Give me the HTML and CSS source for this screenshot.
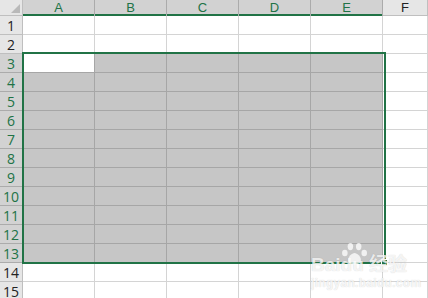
FILE: index.html
```html
<!DOCTYPE html>
<html lang="en">
<head>
    <meta charset="UTF-8">
    <title>Sheet1</title>
    <link rel="stylesheet" href="styles.css">
</head>
<body>
    <div class="sheet">
        <div class="grid" id="grid"></div>
        <div class="selection"><span class="handle"></span></div>
        <div class="watermark">
            <svg class="paw" width="28" height="24" viewBox="0 0 30 26">
                <ellipse cx="10" cy="5" rx="3" ry="4"/>
                <ellipse cx="19" cy="5" rx="3" ry="4"/>
                <ellipse cx="4" cy="12" rx="3" ry="3.5"/>
                <ellipse cx="25" cy="12" rx="3" ry="3.5"/>
                <path d="M8 22 C6 16 12 12 14.5 12 C17 12 23 16 21 22 C19 25 10 25 8 22 Z"/>
            </svg>
            <div class="wm-brand">Bai<span>du</span> 经验</div>
            <div class="wm-url">jingyan.baidu.com</div>
        </div>
    </div>

    <script>
        const grid = document.getElementById('grid');
        const cols = ['A', 'B', 'C', 'D', 'E', 'F'];

        function cell(cls, text) {
            const div = document.createElement('div');
            div.className = cls;
            if (text) div.textContent = text;
            grid.appendChild(div);
        }

        // header row
        cell('corner');
        cols.forEach(function (c, i) {
            cell(i < 5 ? 'col-head picked' : 'col-head', c);
        });

        // rows 1 - 15
        for (let r = 1; r <= 15; r++) {
            const inRange = r >= 3 && r <= 13;
            cell(inRange ? 'row-head picked' : 'row-head', String(r));
            cols.forEach(function (c, i) {
                let cls = 'cell';
                if (inRange && i < 5) {
                    cls += (r === 3 && i === 0) ? ' active' : ' filled';
                }
                cell(cls);
            });
        }
    </script>
</body>
</html>
```

FILE: styles.css
```css
body {
    margin: 0;
    background-color: white;
    font-family: "Open Sans", "Noto Sans", sans-serif;
    overflow: hidden;
}
.sheet {
    position: relative;
    width: 428px;
    height: 298px;
}
.grid {
    display: grid;
    grid-template-columns: 23px repeat(5, 72px) 1fr;
    grid-template-rows: 16px repeat(15, 19px);
}
.grid > div {
    box-sizing: border-box;
}
.corner {
    position: relative;
    background-color: #e6e6e6;
    border-right: 1px solid #bfbfbf;
    border-bottom: 1px solid #bfbfbf;
}
.corner::after {
    content: "";
    position: absolute;
    right: 2px;
    bottom: 2px;
    border-left: 9px solid transparent;
    border-bottom: 9px solid #b9b9b9;
}
.col-head {
    background-color: #e6e6e6;
    border-right: 1px solid #bfbfbf;
    box-shadow: inset 0 -1px #bfbfbf;
    color: #222;
    font-family: "Liberation Sans", sans-serif;
    font-size: 13px;
    line-height: 15px;
    text-align: center;
}
.col-head.picked {
    background-color: #d2d2d2;
    border-right-color: #ababab;
    box-shadow: inset 0 -2px #217346;
    color: #217346;
}
.row-head {
    background-color: #e6e6e6;
    border-right: 1px solid #bfbfbf;
    border-bottom: 1px solid #bfbfbf;
    color: #222;
    font-size: 14px;
    line-height: 19px;
    text-align: center;
}
.row-head.picked {
    background-color: #d2d2d2;
    border-bottom-color: #ababab;
    color: #217346;
}
.cell {
    border-right: 1px solid #d4d4d4;
    border-bottom: 1px solid #d4d4d4;
}
.cell.filled {
    background-color: #c6c6c6;
    border-color: #a6a6a6;
}
.cell.active {
    background-color: white;
    border-color: #a6a6a6;
}
.selection {
    position: absolute;
    left: 22px;
    top: 52px;
    width: 364px;
    height: 212px;
    box-sizing: border-box;
    border: 2px solid #217346;
    pointer-events: none;
}
.handle {
    position: absolute;
    right: -4px;
    bottom: -4px;
    width: 5px;
    height: 5px;
    background-color: #217346;
    border: 1px solid white;
}
.watermark {
    position: absolute;
    left: 311px;
    top: 242px;
    width: 100px;
    color: rgba(255, 255, 255, 0.8);
    text-shadow: 0 0 1px rgba(0, 0, 0, 0.2);
    font-family: "Liberation Sans", "Noto Sans CJK SC", sans-serif;
}
.paw {
    position: absolute;
    left: 30px;
    top: 0;
    fill: rgba(255, 255, 255, 0.75);
}
.wm-brand {
    padding-top: 14px;
    font-size: 19px;
    font-weight: bold;
    line-height: 18px;
    white-space: nowrap;
}
.wm-url {
    padding-top: 3px;
    font-size: 12px;
    font-weight: bold;
    line-height: 13px;
    letter-spacing: 0.3px;
    white-space: nowrap;
}
```
